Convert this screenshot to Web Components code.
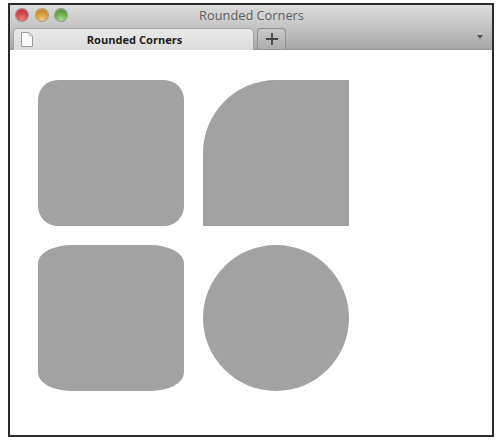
<!DOCTYPE html>
<html><head><meta charset="utf-8"><style>
html,body{margin:0;background:#fff}
body{width:501px;height:443px;overflow:hidden;padding:3px 0 0 8px;box-sizing:border-box;font-family:"Open Sans","Liberation Sans",sans-serif}
</style></head><body>
<browser-window>
  <span slot="title">Rounded Corners</span>
  <span slot="tab">Rounded Corners</span>
  <shape-grid>
    <rounded-shape style="--r:20px"></rounded-shape>
    <rounded-shape style="--r:73px 0 0 0"></rounded-shape>
    <rounded-shape style="--r:23% / 12.5%"></rounded-shape>
    <rounded-shape style="--r:50%"></rounded-shape>
  </shape-grid>
</browser-window>
<script>
function def(name,html){customElements.define(name,class extends HTMLElement{constructor(){super();this.attachShadow({mode:'open'}).innerHTML=html}})}
def('rounded-shape',`<style>:host{display:block;width:146px;height:146px;background:#a2a2a2;border-radius:var(--r)}</style>`);
def('shape-grid',`<style>:host{display:grid;grid-template-columns:146px 146px;gap:19px 19px;padding:30px 0 0 28px}</style><slot></slot>`);
def('traffic-light',`<style>:host{display:block;width:12px;height:12px;border-radius:50%;background:radial-gradient(circle at 50% 85%,var(--l),var(--c) 65%);box-shadow:0 0 0 1px var(--e)}</style>`);
def('tab-icon',`<style>:host{display:block;width:12px;height:15px;flex:none}svg{display:block}</style><svg width="12" height="15" viewBox="0 0 12 15"><path d="M.5.5H8L11.5 4V14.5H.5Z" fill="#fbfbfb" stroke="#9a9a9a"/><path d="M8 .5V4H11.5" fill="none" stroke="#bbb"/></svg>`);
def('browser-window',`<style>
:host{display:flex;flex-direction:column;width:486px;height:434px;box-sizing:border-box;border:2px solid #2c2c2c;background:#fff}
.chrome{display:flex;flex-direction:column;height:45px;flex:none;background:linear-gradient(#dcdcdc,#c6c6c6 45%,#a9a9a9 96%,#8f8f8f)}
.title{display:flex;align-items:center;height:22px;box-sizing:border-box;flex:none;padding:0 0 2px 6px}
.lights{display:flex;gap:7.5px}
.title-text{flex:1;text-align:center;font-size:12.8px;color:#5f5f5f;padding-right:56px;line-height:20px}
.tabs{display:flex;flex:1;align-items:stretch;padding:1px 0 0 3px}
.tab{width:241px;box-sizing:border-box;display:flex;align-items:center;padding:0 0 1px 7px;background:linear-gradient(#e9e9e9,#dcdcdc);border-radius:5px 5px 0 0;border:1px solid #a5a5a5;border-bottom:0}
.tab-text{flex:1;text-align:center;font-size:11.1px;font-weight:700;color:#1f1f1f;padding-right:17px}
.plus{width:29px;box-sizing:border-box;margin:0 0 1px 3px;border:1px solid #8f8f8f;border-bottom:0;border-radius:4px 4px 0 0;display:flex;align-items:center;justify-content:center;background:linear-gradient(#c8c8c8,#aeaeae)}
.menu{margin:0 9px 5px auto;align-self:center;width:0;height:0;border:3.5px solid transparent;border-top:4px solid #555;border-bottom:0}
.page{flex:1}
</style>
<div class="chrome">
  <div class="title">
    <div class="lights">
      <traffic-light style="--c:#c83c42;--l:#ea7f7c;--e:#a8888a"></traffic-light>
      <traffic-light style="--c:#cf8c2c;--l:#efc878;--e:#ab9a7c"></traffic-light>
      <traffic-light style="--c:#5da044;--l:#a8d888;--e:#88a080"></traffic-light>
    </div>
    <div class="title-text"><slot name="title"></slot></div>
  </div>
  <div class="tabs">
    <div class="tab"><tab-icon></tab-icon><div class="tab-text"><slot name="tab"></slot></div></div>
    <div class="plus"><svg width="12" height="12" viewBox="0 0 12 12"><path d="M6 0V12M0 6H12" stroke="#444" stroke-width="1.8"/></svg></div>
    <div class="menu"></div>
  </div>
</div>
<div class="page"><slot></slot></div>`);
</script>
</body></html>
